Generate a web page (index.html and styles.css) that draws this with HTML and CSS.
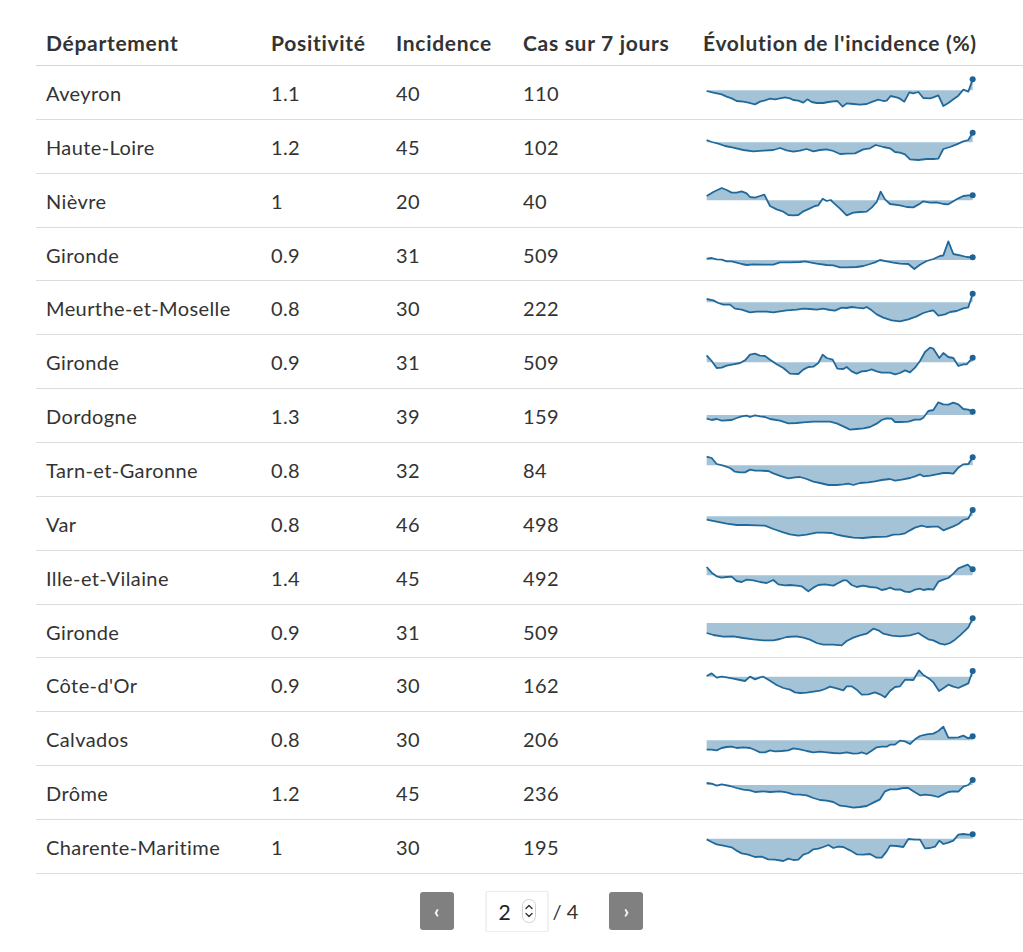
FILE: index.html
```html
<!DOCTYPE html>
<html lang="fr">
<head>
<meta charset="utf-8">
<title>Incidence par département</title>
<link rel="stylesheet" href="styles.css">
</head>
<body>
<div class="table" role="table">
  <div class="row head" role="row">
    <div class="cell">Département</div>
    <div class="cell">Positivité</div>
    <div class="cell">Incidence</div>
    <div class="cell">Cas sur 7 jours</div>
    <div class="cell">Évolution de l'incidence (%)</div>
  </div>

  <div class="row" role="row">
    <div class="cell">Aveyron</div><div class="cell">1.1</div><div class="cell">40</div><div class="cell">110</div>
    <div class="cell spark"><svg viewBox="0 0 870 162" preserveAspectRatio="none"><polygon class="area" points="20,73 20,75 40,80 65,85 80,92 95,97 110,105 130,107 145,110 165,115 180,107 195,103 210,98 225,100 240,97 255,94 270,97 280,102 295,104 310,110 322,100 335,108 350,111 370,111 385,108 400,106 412,105 428,122 440,112 460,114 480,116 500,114 520,106 535,101 550,105 560,104 572,90 590,94 600,98 613,107 628,79 640,82 655,78 670,96 690,97 700,94 715,88 730,120 745,111 760,100 775,89 790,71 805,77 818,40 818,73"/><polyline class="line" points="20,75 40,80 65,85 80,92 95,97 110,105 130,107 145,110 165,115 180,107 195,103 210,98 225,100 240,97 255,94 270,97 280,102 295,104 310,110 322,100 335,108 350,111 370,111 385,108 400,106 412,105 428,122 440,112 460,114 480,116 500,114 520,106 535,101 550,105 560,104 572,90 590,94 600,98 613,107 628,79 640,82 655,78 670,96 690,97 700,94 715,88 730,120 745,111 760,100 775,89 790,71 805,77 818,40"/><ellipse class="dot" cx="818" cy="40" rx="9" ry="9"/></svg></div>
  </div>

  <div class="row" role="row">
    <div class="cell">Haute-Loire</div><div class="cell">1.2</div><div class="cell">45</div><div class="cell">102</div>
    <div class="cell spark"><svg viewBox="0 0 870 162" preserveAspectRatio="none"><polygon class="area" points="20,67 20,60 35,66 55,71 75,78 100,83 130,90 160,94 190,92 220,90 240,84 260,91 280,95 300,92 320,87 340,94 360,90 380,88 400,93 420,102 440,101 465,100 490,88 510,85 527,75 550,81 570,85 585,96 600,98 615,103 630,118 655,120 680,117 700,117 715,116 730,87 750,81 770,73 790,64 805,60 818,38 818,67"/><polyline class="line" points="20,60 35,66 55,71 75,78 100,83 130,90 160,94 190,92 220,90 240,84 260,91 280,95 300,92 320,87 340,94 360,90 380,88 400,93 420,102 440,101 465,100 490,88 510,85 527,75 550,81 570,85 585,96 600,98 615,103 630,118 655,120 680,117 700,117 715,116 730,87 750,81 770,73 790,64 805,60 818,38"/><ellipse class="dot" cx="818" cy="38" rx="9" ry="9"/></svg></div>
  </div>

  <div class="row" role="row">
    <div class="cell">Nièvre</div><div class="cell">1</div><div class="cell">20</div><div class="cell">40</div>
    <div class="cell spark"><svg viewBox="0 0 870 162" preserveAspectRatio="none"><polygon class="area" points="20,79 20,66 40,54 65,42 80,48 95,56 110,56 125,52 140,58 150,69 165,71 180,66 193,62 210,96 230,106 250,113 265,123 280,124 295,123 310,112 330,103 345,96 355,94 368,74 380,81 392,78 400,86 420,104 440,124 460,116 480,114 500,113 515,101 530,84 542,53 555,76 570,90 600,94 620,99 640,100 655,92 670,82 690,86 710,85 730,90 745,91 760,82 775,73 790,66 805,64 818,64 818,79"/><polyline class="line" points="20,66 40,54 65,42 80,48 95,56 110,56 125,52 140,58 150,69 165,71 180,66 193,62 210,96 230,106 250,113 265,123 280,124 295,123 310,112 330,103 345,96 355,94 368,74 380,81 392,78 400,86 420,104 440,124 460,116 480,114 500,113 515,101 530,84 542,53 555,76 570,90 600,94 620,99 640,100 655,92 670,82 690,86 710,85 730,90 745,91 760,82 775,73 790,66 805,64 818,64"/><ellipse class="dot" cx="818" cy="64" rx="9" ry="9"/></svg></div>
  </div>

  <div class="row" role="row">
    <div class="cell">Gironde</div><div class="cell">0.9</div><div class="cell">31</div><div class="cell">509</div>
    <div class="cell spark"><svg viewBox="0 0 870 162" preserveAspectRatio="none"><polygon class="area" points="20,96 20,92 35,90 50,94 65,95 80,100 95,100 110,104 125,108 140,111 160,109 190,110 220,110 240,103 270,103 300,102 315,100 330,103 350,107 380,111 400,112 420,118 440,118 470,117 490,114 510,108 525,103 540,96 560,100 580,104 600,107 625,108 643,123 660,110 680,99 700,93 720,84 730,82 745,40 760,78 780,82 800,87 818,88 818,96"/><polyline class="line" points="20,92 35,90 50,94 65,95 80,100 95,100 110,104 125,108 140,111 160,109 190,110 220,110 240,103 270,103 300,102 315,100 330,103 350,107 380,111 400,112 420,118 440,118 470,117 490,114 510,108 525,103 540,96 560,100 580,104 600,107 625,108 643,123 660,110 680,99 700,93 720,84 730,82 745,40 760,78 780,82 800,87 818,88"/><ellipse class="dot" cx="818" cy="88" rx="9" ry="9"/></svg></div>
  </div>

  <div class="row" role="row">
    <div class="cell">Meurthe-et-Moselle</div><div class="cell">0.8</div><div class="cell">30</div><div class="cell">222</div>
    <div class="cell spark"><svg viewBox="0 0 870 162" preserveAspectRatio="none"><polygon class="area" points="20,64 20,54 40,58 55,66 70,71 90,71 105,83 125,86 150,94 170,92 200,92 220,94 240,91 260,88 290,86 310,83 330,84 350,86 370,83 390,87 405,89 425,80 440,81 455,78 470,80 490,82 500,78 515,88 530,100 550,110 575,118 600,121 625,115 650,106 670,96 690,90 700,88 715,104 735,100 750,93 770,90 790,82 805,79 818,38 818,64"/><polyline class="line" points="20,54 40,58 55,66 70,71 90,71 105,83 125,86 150,94 170,92 200,92 220,94 240,91 260,88 290,86 310,83 330,84 350,86 370,83 390,87 405,89 425,80 440,81 455,78 470,80 490,82 500,78 515,88 530,100 550,110 575,118 600,121 625,115 650,106 670,96 690,90 700,88 715,104 735,100 750,93 770,90 790,82 805,79 818,38"/><ellipse class="dot" cx="818" cy="38" rx="9" ry="9"/></svg></div>
  </div>

  <div class="row" role="row">
    <div class="cell">Gironde</div><div class="cell">0.9</div><div class="cell">31</div><div class="cell">509</div>
    <div class="cell spark"><svg viewBox="0 0 870 162" preserveAspectRatio="none"><polygon class="area" points="20,82 20,61 35,78 50,99 65,98 80,92 100,88 120,84 135,76 150,59 165,56 180,62 195,63 210,74 230,88 250,99 270,116 295,117 310,104 325,96 340,95 355,84 368,59 380,69 398,74 412,101 430,102 440,96 455,109 470,116 485,109 500,108 515,103 530,109 545,113 570,113 585,118 600,114 615,106 630,112 645,98 660,78 675,51 690,38 700,41 718,69 730,54 745,66 760,69 775,93 790,88 800,88 818,68 818,82"/><polyline class="line" points="20,61 35,78 50,99 65,98 80,92 100,88 120,84 135,76 150,59 165,56 180,62 195,63 210,74 230,88 250,99 270,116 295,117 310,104 325,96 340,95 355,84 368,59 380,69 398,74 412,101 430,102 440,96 455,109 470,116 485,109 500,108 515,103 530,109 545,113 570,113 585,118 600,114 615,106 630,112 645,98 660,78 675,51 690,38 700,41 718,69 730,54 745,66 760,69 775,93 790,88 800,88 818,68"/><ellipse class="dot" cx="818" cy="68" rx="9" ry="9"/></svg></div>
  </div>

  <div class="row" role="row">
    <div class="cell">Dordogne</div><div class="cell">1.3</div><div class="cell">39</div><div class="cell">159</div>
    <div class="cell spark"><svg viewBox="0 0 870 162" preserveAspectRatio="none"><polygon class="area" points="20,78 20,89 35,93 50,90 65,95 95,93 110,87 125,82 140,80 150,84 165,79 180,82 195,84 210,90 240,95 265,103 290,102 310,100 340,98 370,98 390,98 410,103 430,112 450,122 470,120 490,118 510,114 530,104 545,93 560,88 575,89 585,99 600,99 625,98 645,92 660,92 670,86 685,66 700,63 715,40 730,46 745,47 760,41 775,46 790,60 805,62 818,68 818,78"/><polyline class="line" points="20,89 35,93 50,90 65,95 95,93 110,87 125,82 140,80 150,84 165,79 180,82 195,84 210,90 240,95 265,103 290,102 310,100 340,98 370,98 390,98 410,103 430,112 450,122 470,120 490,118 510,114 530,104 545,93 560,88 575,89 585,99 600,99 625,98 645,92 660,92 670,86 685,66 700,63 715,40 730,46 745,47 760,41 775,46 790,60 805,62 818,68"/><ellipse class="dot" cx="818" cy="68" rx="9" ry="9"/></svg></div>
  </div>

  <div class="row" role="row">
    <div class="cell">Tarn-et-Garonne</div><div class="cell">0.8</div><div class="cell">32</div><div class="cell">84</div>
    <div class="cell spark"><svg viewBox="0 0 870 162" preserveAspectRatio="none"><polygon class="area" points="20,67 20,41 35,45 50,63 70,68 90,75 105,86 120,88 135,88 150,80 165,83 180,83 205,84 220,91 245,100 265,106 285,103 300,102 320,108 340,116 360,120 385,126 410,126 430,124 445,122 460,126 480,120 505,118 525,115 545,111 570,108 585,113 605,110 630,105 645,100 660,94 670,100 690,98 710,94 730,90 745,90 760,92 775,74 790,64 805,63 818,43 818,67"/><polyline class="line" points="20,41 35,45 50,63 70,68 90,75 105,86 120,88 135,88 150,80 165,83 180,83 205,84 220,91 245,100 265,106 285,103 300,102 320,108 340,116 360,120 385,126 410,126 430,124 445,122 460,126 480,120 505,118 525,115 545,111 570,108 585,113 605,110 630,105 645,100 660,94 670,100 690,98 710,94 730,90 745,90 760,92 775,74 790,64 805,63 818,43"/><ellipse class="dot" cx="818" cy="43" rx="9" ry="9"/></svg></div>
  </div>

  <div class="row" role="row">
    <div class="cell">Var</div><div class="cell">0.8</div><div class="cell">46</div><div class="cell">498</div>
    <div class="cell spark"><svg viewBox="0 0 870 162" preserveAspectRatio="none"><polygon class="area" points="20,58 20,68 50,74 80,80 110,84 140,84 170,85 195,86 220,96 250,106 270,112 295,116 320,113 350,107 370,107 395,108 410,113 430,117 460,122 490,123 520,120 560,119 580,113 600,112 615,109 630,100 645,92 665,86 680,90 700,89 715,89 730,100 745,94 760,88 775,81 790,69 805,65 818,39 818,58"/><polyline class="line" points="20,68 50,74 80,80 110,84 140,84 170,85 195,86 220,96 250,106 270,112 295,116 320,113 350,107 370,107 395,108 410,113 430,117 460,122 490,123 520,120 560,119 580,113 600,112 615,109 630,100 645,92 665,86 680,90 700,89 715,89 730,100 745,94 760,88 775,81 790,69 805,65 818,39"/><ellipse class="dot" cx="818" cy="39" rx="9" ry="9"/></svg></div>
  </div>

  <div class="row" role="row">
    <div class="cell">Ille-et-Vilaine</div><div class="cell">1.4</div><div class="cell">45</div><div class="cell">492</div>
    <div class="cell spark"><svg viewBox="0 0 870 162" preserveAspectRatio="none"><polygon class="area" points="20,73 20,48 35,65 50,76 65,80 80,78 95,77 110,90 125,93 140,86 160,88 180,93 200,96 220,87 235,100 255,103 270,102 290,104 305,106 325,121 340,110 355,102 375,100 400,104 415,96 430,88 440,88 455,102 470,108 490,104 510,108 530,110 545,117 560,114 570,110 585,116 600,115 615,122 630,123 645,116 660,113 670,117 685,114 700,116 715,92 730,86 745,81 760,68 775,52 790,46 803,41 818,55 818,73"/><polyline class="line" points="20,48 35,65 50,76 65,80 80,78 95,77 110,90 125,93 140,86 160,88 180,93 200,96 220,87 235,100 255,103 270,102 290,104 305,106 325,121 340,110 355,102 375,100 400,104 415,96 430,88 440,88 455,102 470,108 490,104 510,108 530,110 545,117 560,114 570,110 585,116 600,115 615,122 630,123 645,116 660,113 670,117 685,114 700,116 715,92 730,86 745,81 760,68 775,52 790,46 803,41 818,55"/><ellipse class="dot" cx="818" cy="55" rx="9" ry="9"/></svg></div>
  </div>

  <div class="row" role="row">
    <div class="cell">Gironde</div><div class="cell">0.9</div><div class="cell">31</div><div class="cell">509</div>
    <div class="cell spark"><svg viewBox="0 0 870 162" preserveAspectRatio="none"><polygon class="area" points="20,54 20,84 40,90 70,95 100,94 130,99 160,103 190,106 220,106 240,102 260,96 290,94 310,98 330,104 350,114 370,119 400,119 425,121 440,108 460,98 480,91 500,86 520,71 535,76 550,86 575,92 600,94 630,91 655,84 670,94 685,103 700,106 720,116 735,119 750,114 765,104 780,91 795,77 805,67 818,40 818,54"/><polyline class="line" points="20,84 40,90 70,95 100,94 130,99 160,103 190,106 220,106 240,102 260,96 290,94 310,98 330,104 350,114 370,119 400,119 425,121 440,108 460,98 480,91 500,86 520,71 535,76 550,86 575,92 600,94 630,91 655,84 670,94 685,103 700,106 720,116 735,119 750,114 765,104 780,91 795,77 805,67 818,40"/><ellipse class="dot" cx="818" cy="40" rx="9" ry="9"/></svg></div>
  </div>

  <div class="row" role="row">
    <div class="cell">Côte-d'Or</div><div class="cell">0.9</div><div class="cell">30</div><div class="cell">162</div>
    <div class="cell spark"><svg viewBox="0 0 870 162" preserveAspectRatio="none"><polygon class="area" points="20,56 20,54 35,46 50,59 65,56 80,58 100,62 120,66 135,69 150,56 165,64 180,58 190,56 210,68 230,81 250,90 270,95 285,103 300,105 320,104 340,101 360,98 375,93 390,86 410,91 430,97 440,85 455,85 470,95 485,110 505,109 525,103 540,109 555,118 570,99 585,87 600,85 615,65 640,66 657,37 670,51 690,64 700,73 717,99 730,91 745,80 760,86 775,90 790,83 805,76 818,39 818,56"/><polyline class="line" points="20,54 35,46 50,59 65,56 80,58 100,62 120,66 135,69 150,56 165,64 180,58 190,56 210,68 230,81 250,90 270,95 285,103 300,105 320,104 340,101 360,98 375,93 390,86 410,91 430,97 440,85 455,85 470,95 485,110 505,109 525,103 540,109 555,118 570,99 585,87 600,85 615,65 640,66 657,37 670,51 690,64 700,73 717,99 730,91 745,80 760,86 775,90 790,83 805,76 818,39"/><ellipse class="dot" cx="818" cy="39" rx="9" ry="9"/></svg></div>
  </div>

  <div class="row" role="row">
    <div class="cell">Calvados</div><div class="cell">0.8</div><div class="cell">30</div><div class="cell">206</div>
    <div class="cell spark"><svg viewBox="0 0 870 162" preserveAspectRatio="none"><polygon class="area" points="20,85 20,113 35,113 50,115 65,108 80,105 95,104 110,108 130,106 150,108 165,114 180,121 195,121 210,115 225,118 245,117 265,115 280,109 300,112 320,117 340,121 360,119 380,121 400,123 420,124 440,121 460,125 475,124 485,121 500,126 515,116 530,106 545,104 560,104 570,98 585,98 600,86 615,88 630,96 645,82 660,72 680,67 700,65 715,57 730,44 745,77 760,77 775,76 790,71 805,79 818,73 818,85"/><polyline class="line" points="20,113 35,113 50,115 65,108 80,105 95,104 110,108 130,106 150,108 165,114 180,121 195,121 210,115 225,118 245,117 265,115 280,109 300,112 320,117 340,121 360,119 380,121 400,123 420,124 440,121 460,125 475,124 485,121 500,126 515,116 530,106 545,104 560,104 570,98 585,98 600,86 615,88 630,96 645,82 660,72 680,67 700,65 715,57 730,44 745,77 760,77 775,76 790,71 805,79 818,73"/><ellipse class="dot" cx="818" cy="73" rx="9" ry="9"/></svg></div>
  </div>

  <div class="row" role="row">
    <div class="cell">Drôme</div><div class="cell">1.2</div><div class="cell">45</div><div class="cell">236</div>
    <div class="cell spark"><svg viewBox="0 0 870 162" preserveAspectRatio="none"><polygon class="area" points="20,57 20,51 35,53 50,59 65,55 90,60 110,66 130,71 150,73 165,78 190,76 210,78 240,76 260,79 280,85 300,86 320,88 340,96 360,102 380,104 400,108 420,119 440,121 460,125 480,123 500,120 520,110 540,100 555,76 570,70 590,70 610,66 625,66 640,76 660,88 675,86 695,88 715,93 730,85 745,78 760,76 775,77 790,62 805,57 818,42 818,57"/><polyline class="line" points="20,51 35,53 50,59 65,55 90,60 110,66 130,71 150,73 165,78 190,76 210,78 240,76 260,79 280,85 300,86 320,88 340,96 360,102 380,104 400,108 420,119 440,121 460,125 480,123 500,120 520,110 540,100 555,76 570,70 590,70 610,66 625,66 640,76 660,88 675,86 695,88 715,93 730,85 745,78 760,76 775,77 790,62 805,57 818,42"/><ellipse class="dot" cx="818" cy="42" rx="9" ry="9"/></svg></div>
  </div>

  <div class="row" role="row">
    <div class="cell">Charente-Maritime</div><div class="cell">1</div><div class="cell">30</div><div class="cell">195</div>
    <div class="cell spark"><svg viewBox="0 0 870 162" preserveAspectRatio="none"><polygon class="area" points="20,56 20,58 35,66 50,73 70,77 95,82 110,92 125,100 145,104 165,111 185,110 205,118 225,119 250,123 265,116 280,120 295,119 310,104 325,99 340,88 355,86 370,81 385,75 400,84 415,80 430,81 450,91 470,103 490,104 510,102 530,113 545,113 560,94 570,77 590,78 610,81 625,57 645,59 660,59 675,85 690,84 705,80 718,62 730,72 745,68 760,62 775,44 790,42 805,44 818,43 818,56"/><polyline class="line" points="20,58 35,66 50,73 70,77 95,82 110,92 125,100 145,104 165,111 185,110 205,118 225,119 250,123 265,116 280,120 295,119 310,104 325,99 340,88 355,86 370,81 385,75 400,84 415,80 430,81 450,91 470,103 490,104 510,102 530,113 545,113 560,94 570,77 590,78 610,81 625,57 645,59 660,59 675,85 690,84 705,80 718,62 730,72 745,68 760,62 775,44 790,42 805,44 818,43"/><ellipse class="dot" cx="818" cy="43" rx="9" ry="9"/></svg></div>
  </div>
</div>

<nav class="pager">
  <button class="page-btn" type="button" aria-label="Page précédente">‹</button>
  <div class="page-input">
    <span class="page-num">2</span>
    <span class="spin"><svg viewBox="0 0 14 24" width="14" height="24"><rect x="0.5" y="0.5" width="13" height="23" rx="6" fill="#fff" stroke="#d0d0d0"/><path d="M4 9.5 L7 6.5 L10 9.5" fill="none" stroke="#333" stroke-width="1.4" stroke-linecap="round" stroke-linejoin="round"/><path d="M4 14.5 L7 17.5 L10 14.5" fill="none" stroke="#333" stroke-width="1.4" stroke-linecap="round" stroke-linejoin="round"/></svg></span>
  </div>
  <span class="page-total">/ 4</span>
  <button class="page-btn" type="button" aria-label="Page suivante">›</button>
</nav>
</body>
</html>
```

FILE: styles.css
```css
* { box-sizing: border-box; }

body {
  margin: 0;
  padding: 20px 0 0 36px;
  background: #fff;
  font-family: Lato, "Noto Sans", sans-serif;
  color: #333;
}

.table {
  width: 987px;
}

.row {
  display: grid;
  grid-template-columns: 225px 125px 127px 180px 1fr;
  align-items: center;
  height: 53.87px;
  border-bottom: 1px solid #dcdcdc;
  font-size: 20px;
  letter-spacing: 0.4px;
}

.row.head {
  height: 46px;
  font-size: 21px;
  font-weight: 700;
  letter-spacing: 0.7px;
  color: #333;
  border-bottom: 1px solid #d6d6d6;
}

.cell {
  padding: 0 10px;
  white-space: nowrap;
}

.cell.spark {
  padding: 0 0 0 7px;
  align-self: stretch;
}

.cell.spark svg {
  display: block;
  width: 290px;
  height: 100%;
}

.area {
  fill: #a4c3d7;
  stroke: none;
}

.line {
  fill: none;
  stroke: #22699b;
  stroke-width: 1.8;
  stroke-linejoin: round;
  vector-effect: non-scaling-stroke;
}

.dot {
  fill: #1f6396;
}

.pager {
  width: 987px;
  display: flex;
  justify-content: center;
  align-items: center;
  padding: 17px 0 0 4px;
  font-size: 20px;
}

.page-btn {
  width: 34px;
  height: 38px;
  border: none;
  border-radius: 3px;
  background: #808080;
  color: #fff;
  font-family: inherit;
  font-size: 18px;
  font-weight: 700;
  padding: 0;
  line-height: 38px;
}

.page-input {
  margin-left: 32px;
  width: 62px;
  height: 41px;
  display: flex;
  align-items: center;
  padding-left: 12px;
  gap: 11px;
  background: #fff;
  border: 1px solid #eee;
  box-shadow: 0 1px 2px rgba(0,0,0,0.12);
  color: #222;
}

.page-num {
  font-size: 21px;
}

.spin {
  display: flex;
}

.page-total {
  margin-left: 5px;
  margin-right: 31px;
  color: #333;
}
```
